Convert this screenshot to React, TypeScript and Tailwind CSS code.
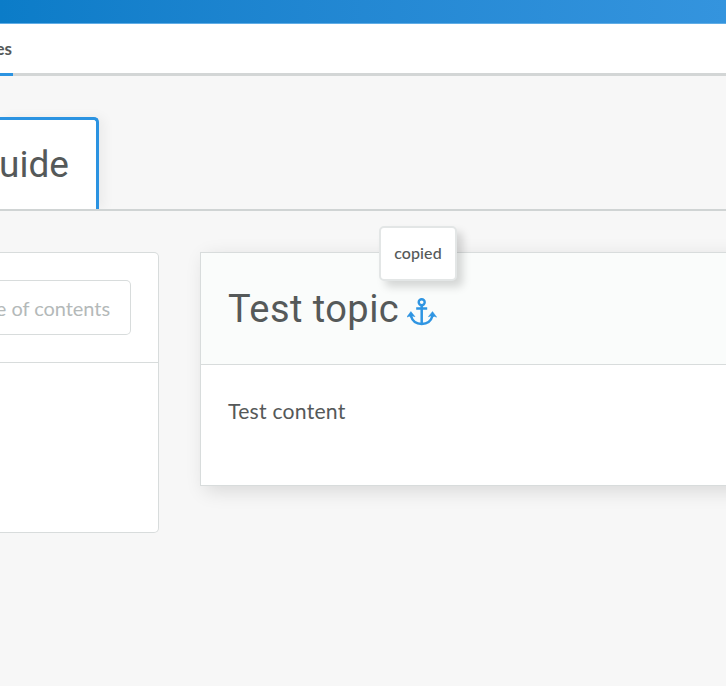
function AnchorIcon() {
  return (
    <svg width="30" height="28" viewBox="0 0 30 28" fill="none" stroke="#2f95e2" className="block shrink-0">
      <circle cx="14.7" cy="4.2" r="3" strokeWidth="2.4" />
      <path d="M14.7 7.3V26M9.2 10.5H20.2" strokeWidth="2.5" />
      <path d="M3.9 17.8C5.3 23 9.6 26 14.7 26S24.1 23 25.5 17.8" strokeWidth="2.5" />
      <path d="M-.3 19.2 3.9 13.6 8 18.7 5.5 18 4 19.4 2.4 18.2ZM29.7 19.2 25.5 13.6 21.4 18.7 23.9 18 25.4 19.4 27 18.2Z" fill="#2f95e2" stroke="#2f95e2" strokeWidth="0.5" />
    </svg>
  );
}

export default function App() {
  return (
    <div className="flex h-[686px] w-[726px] flex-col overflow-hidden bg-[#f7f7f7] font-['Lato',sans-serif] text-[#555959]">
      <header className="h-6 shrink-0 border-b border-[#60ade6] bg-linear-to-r from-[#0b7cc8] to-[#3494de]" />
      <nav className="flex h-[52px] shrink-0 border-b-[3px] border-[#d3d6d6] bg-white">
        <div className="-mb-[3px] flex w-[13px] justify-end overflow-hidden border-b-[3px] border-[#2b93e1]">
          <span className="pt-[13px] pr-px text-[17px] leading-[24px] font-bold">es</span>
        </div>
      </nav>
      <section className="flex h-[135px] shrink-0 items-end overflow-hidden border-b-2 border-[#d0d4d4]">
        <div className="flex h-[92px] w-[99px] justify-end rounded-tr-[5px] border-t-[3px] border-r-[3px] border-[#2b93e1] bg-white pr-[27px] shadow-[5px_0_12px_#0000000d]">
          <h2 className="pt-[22px] font-['Roboto',sans-serif] text-[37px] leading-[46px]">uide</h2>
        </div>
      </section>
      <main className="flex items-start gap-[41px] pt-[41px]">
        <aside className="h-[281px] w-[159px] shrink-0 rounded-r-[5px] border border-l-0 border-[#d8dcdc] bg-white">
          <div className="flex h-[110px] border-b border-[#d8dcdc] pt-[27px]">
            <div className="flex h-[55px] w-[131px] items-center justify-end rounded-r-[5px] border border-l-0 border-[#d8dcdc] pt-px pr-5 text-[20px] tracking-[-0.05px] whitespace-nowrap text-[#b4b9b9]">
              e of contents
            </div>
          </div>
        </aside>
        <article className="relative h-[234px] w-[560px] shrink-0 border border-[#d8dcdc] bg-white shadow-[5px_5px_18px_#00000020]">
          <div className="flex h-[112px] border-b border-[#d8dcdc] bg-[#fafcfb] pl-[27px]">
            <h1 className="w-[179px] pt-[33px] font-['Roboto',sans-serif] text-[38px] leading-[46px] tracking-[0.45px] whitespace-nowrap">Test topic</h1>
            <div className="pt-[45px]"><AnchorIcon /></div>
          </div>
          <p className="pt-8 pl-[27px] text-[21.2px] leading-[28px] tracking-[0.22px]">Test content</p>
          <div className="absolute -top-[27px] left-[178px] flex h-[55px] w-[78px] items-center justify-center rounded-[5px] border-2 border-[#e3e6e6] bg-white pb-px text-[16px] font-medium tracking-[0.1px] shadow-[6px_6px_8px_#00000026]">
            copied
          </div>
        </article>
      </main>
    </div>
  );
}
